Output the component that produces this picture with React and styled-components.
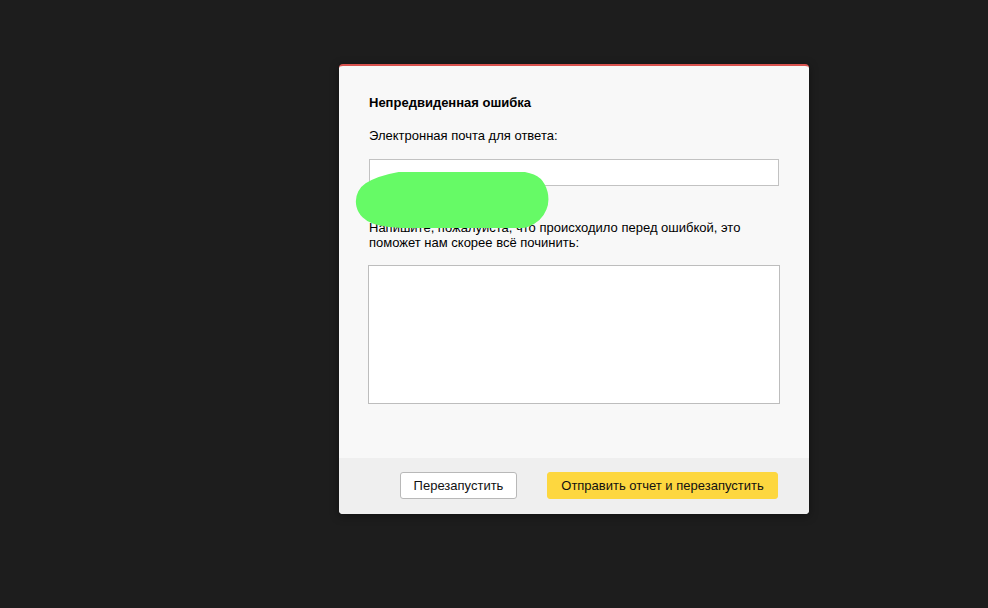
import React from 'react';
import styled, { createGlobalStyle } from 'styled-components';

const GlobalStyle = createGlobalStyle`
  html, body {
    margin: 0;
    padding: 0;
    background: #1d1d1d;
  }
  body {
    font-family: "Liberation Sans", Arial, sans-serif;
  }
`;

const Page = styled.div`
  width: 988px;
  height: 608px;
  padding: 64px 0 0 339px;
  box-sizing: border-box;
`;

const Dialog = styled.div`
  position: relative;
  width: 470px;
  background: #f8f8f8;
  border-top: 2px solid #d9534f;
  border-radius: 4px;
  overflow: hidden;
  box-shadow: 0 2px 10px rgba(0, 0, 0, 0.4);
`;

const Body = styled.div`
  display: flex;
  flex-direction: column;
  padding: 29px 30px 54px 30px;
  font-size: 13px;
  line-height: 15px;
  color: #000;
`;

const Title = styled.div`
  font-weight: bold;
  font-size: 13px;
`;

const Label = styled.div`
  margin-top: ${p => p.$gap}px;
`;

const Input = styled.div`
  margin-top: 16px;
  height: 27px;
  box-sizing: border-box;
  border: 1px solid #c2c2c2;
  background: #fff;
`;

const TextArea = styled.div`
  margin: 15px -1px 0 -1px;
  height: 139px;
  box-sizing: border-box;
  border: 1px solid #bdbdbd;
  background: #fff;
`;

const Footer = styled.div`
  display: flex;
  justify-content: flex-end;
  gap: 30px;
  padding: 14px 31px 15px 0;
  background: #efefef;
`;

const Button = styled.div`
  height: 27px;
  box-sizing: border-box;
  display: flex;
  align-items: center;
  justify-content: center;
  padding-bottom: 1px;
  width: ${p => p.$w}px;
  font-size: 13px;
  color: #111;
  border-radius: 3px;
  background: ${p => (p.$primary ? '#fdd73f' : '#fff')};
  border: 1px solid ${p => (p.$primary ? '#fdd73f' : '#b8b8b8')};
`;

const Scribble = styled.svg`
  position: absolute;
  left: 12px;
  top: 106px;
`;

export default function App() {
  return (
    <>
      <GlobalStyle />
      <Page>
        <Dialog>
          <Body>
            <Title>Непредвиденная ошибка</Title>
            <Label $gap={18}>Электронная почта для ответа:</Label>
            <Input />
            <Label $gap={34}>
              Напишите, пожалуиста, что происходило перед ошибкой, это
              <br />
              поможет нам скорее всё починить:
            </Label>
            <TextArea />
          </Body>
          <Footer>
            <Button $w={117}>Перезапустить</Button>
            <Button $primary $w={231}>Отправить отчет и перезапустить</Button>
          </Footer>
          <Scribble width="200" height="56" viewBox="0 0 200 56">
            <path
              d="M26 29 C40 20, 70 17, 110 17 C140 17, 165 18, 175 22 C178 28, 176 33, 170 35 C130 37, 80 38, 40 34 C30 33, 25 31, 26 29 Z"
              fill="#66fa66"
              stroke="#66fa66"
              strokeWidth="42"
              strokeLinejoin="round"
              strokeLinecap="round"
            />
          </Scribble>
        </Dialog>
      </Page>
    </>
  );
}
